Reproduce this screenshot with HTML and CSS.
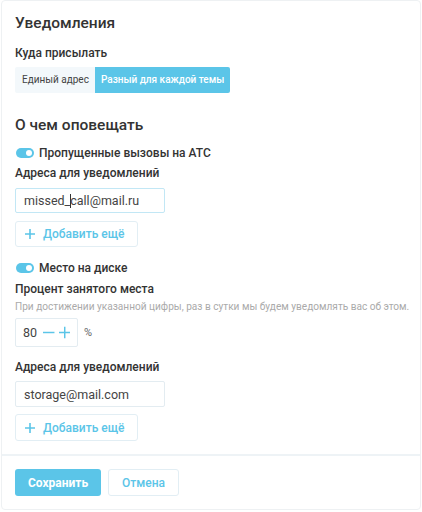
FILE: index.html
```html
<!DOCTYPE html>
<html lang="ru">
<head>
<meta charset="utf-8">
<link rel="stylesheet" href="styles.css">
</head>
<body>
<div class="card">
  <div class="body">
    <h1 class="title">Уведомления</h1>
    <div class="label l-where">Куда присылать</div>
    <div class="seg">
      <span class="seg-item">Единый адрес</span>
      <span class="seg-item active">Разный для каждой темы</span>
    </div>
    <h2 class="title2">О чем оповещать</h2>
    <div class="toggle-row t1"><span class="toggle"></span><span>Пропущенные вызовы на АТС</span></div>
    <div class="label l-addr1">Адреса для уведомлений</div>
    <div class="input focus i1">missed_<span class="caret"></span>call@mail.ru</div>
    <button class="add a1"><svg width="10" height="10" viewBox="0 0 10 10"><path d="M5 0v10M0 5h10" stroke="#5bc5e8" stroke-width="1.6"/></svg>Добавить ещё</button>
    <div class="toggle-row t2"><span class="toggle"></span><span>Место на диске</span></div>
    <div class="label l-pct">Процент занятого места</div>
    <div class="hint">При достижении указанной цифры, раз в сутки мы будем уведомлять вас об этом.</div>
    <div class="step-row">
      <div class="stepper"><span class="num">80</span>
        <svg width="13" height="13" viewBox="0 0 14 14"><path d="M0 7h14" stroke="#5bc5e8" stroke-width="1.8"/></svg>
        <svg width="13" height="13" viewBox="0 0 14 14"><path d="M7 0v14M0 7h14" stroke="#5bc5e8" stroke-width="1.8"/></svg>
      </div>
      <span class="pct">%</span>
    </div>
    <div class="label l-addr2">Адреса для уведомлений</div>
    <div class="input i2">storage@mail.com</div>
    <button class="add a2"><svg width="10" height="10" viewBox="0 0 10 10"><path d="M5 0v10M0 5h10" stroke="#5bc5e8" stroke-width="1.6"/></svg>Добавить ещё</button>
  </div>
  <div class="footer">
    <button class="save">Сохранить</button>
    <button class="cancel">Отмена</button>
  </div>
</div>
</body>
</html>
```
FILE: styles.css
```css
* { box-sizing: border-box; }
body { margin: 0; font-family: Roboto, "Noto Sans", sans-serif; color: #333; background: #fff; }
.card { margin: 0 1px; width: 420px; height: 510px; border: 1px solid #eef1f3; border-radius: 4px; }
.body { padding: 12px 13px 0 13px; display: flex; flex-direction: column; align-items: flex-start; }
.title { font-size: 15.5px; font-weight: 500; margin: 0; line-height: 20px; color: #333; }
.title2 { font-size: 15.5px; font-weight: 500; margin: 22px 0 0; line-height: 20px; color: #333; }
.label { font-size: 12px; font-weight: 500; line-height: 16px; color: #333; white-space: nowrap; }
.l-where { margin-top: 12px; }
.l-addr1 { margin-top: 4px; }
.l-pct { margin-top: 5px; }
.l-addr2 { margin-top: 12px; }
.seg { display: flex; margin-top: 6px; height: 26px; }
.seg-item { font-size: 10px; line-height: 26px; padding: 0 6px 0 7px; background: #f3f8fb; color: #444; border-radius: 2px 0 0 2px; white-space: nowrap; }
.seg-item.active { background: #5bc5e8; color: #fff; font-weight: 500; padding: 0 6px; border-radius: 0 2px 2px 0; }
.toggle-row { display: flex; align-items: center; gap: 5px; font-size: 12px; font-weight: 500; line-height: 16px; white-space: nowrap; color: #333; }
.t1 { margin-top: 10px; }
.t2 { margin-top: 13px; }
.toggle { width: 18px; height: 10px; border-radius: 5px; background: #5bc5e8; position: relative; margin-left: 1px; }
.toggle::after { content: ""; position: absolute; right: 2px; top: 2px; width: 6px; height: 6px; border-radius: 50%; background: #fff; }
.input { width: 150px; border: 1px solid #e3ecf1; border-radius: 2px; font-size: 12.5px; padding: 0 8px; color: #444; background: #fff; white-space: nowrap; display: flex; align-items: center; }
.i1 { margin-top: 7px; height: 25px; }
.i2 { margin-top: 6px; height: 26px; }
.input.focus { border-color: #c2e7f5; }
.caret { display: inline-block; width: 1px; height: 14px; background: #333; margin: 0 -1px 0 0; }
.add { display: flex; align-items: center; gap: 8px; padding: 0 9px; border: 1px solid #e2eef4; border-radius: 3px; background: #fff; font-family: inherit; font-size: 12px; font-weight: 500; color: #5bc5e8; width: 123px; white-space: nowrap; }
.a1 { margin-top: 8px; height: 26px; }
.a2 { margin-top: 7px; height: 27px; }
.hint { font-size: 10.1px; color: #aaa; margin-top: 3px; line-height: 14px; white-space: nowrap; }
.step-row { display: flex; align-items: center; gap: 6px; margin-top: 4px; }
.stepper { display: flex; align-items: center; gap: 4px; height: 29px; width: 63px; border: 1px solid #e3ecf1; border-radius: 2px; padding: 0 7px; font-size: 12.5px; color: #444; }
.num { margin-right: 2px; }
.pct { font-size: 11px; color: #666; }
.footer { margin-top: 13px; border-top: 2px solid #eef3f6; padding: 13px 13px 0; display: flex; gap: 7px; }
.save { height: 27px; width: 86px; background: #5bc5e8; color: #fff; border: 0; border-radius: 3px; font-family: inherit; font-size: 12px; font-weight: 700; }
.cancel { height: 27px; width: 71px; background: #fff; color: #5bc5e8; border: 1px solid #e2eef4; border-radius: 3px; font-family: inherit; font-size: 12px; font-weight: 500; }
```
